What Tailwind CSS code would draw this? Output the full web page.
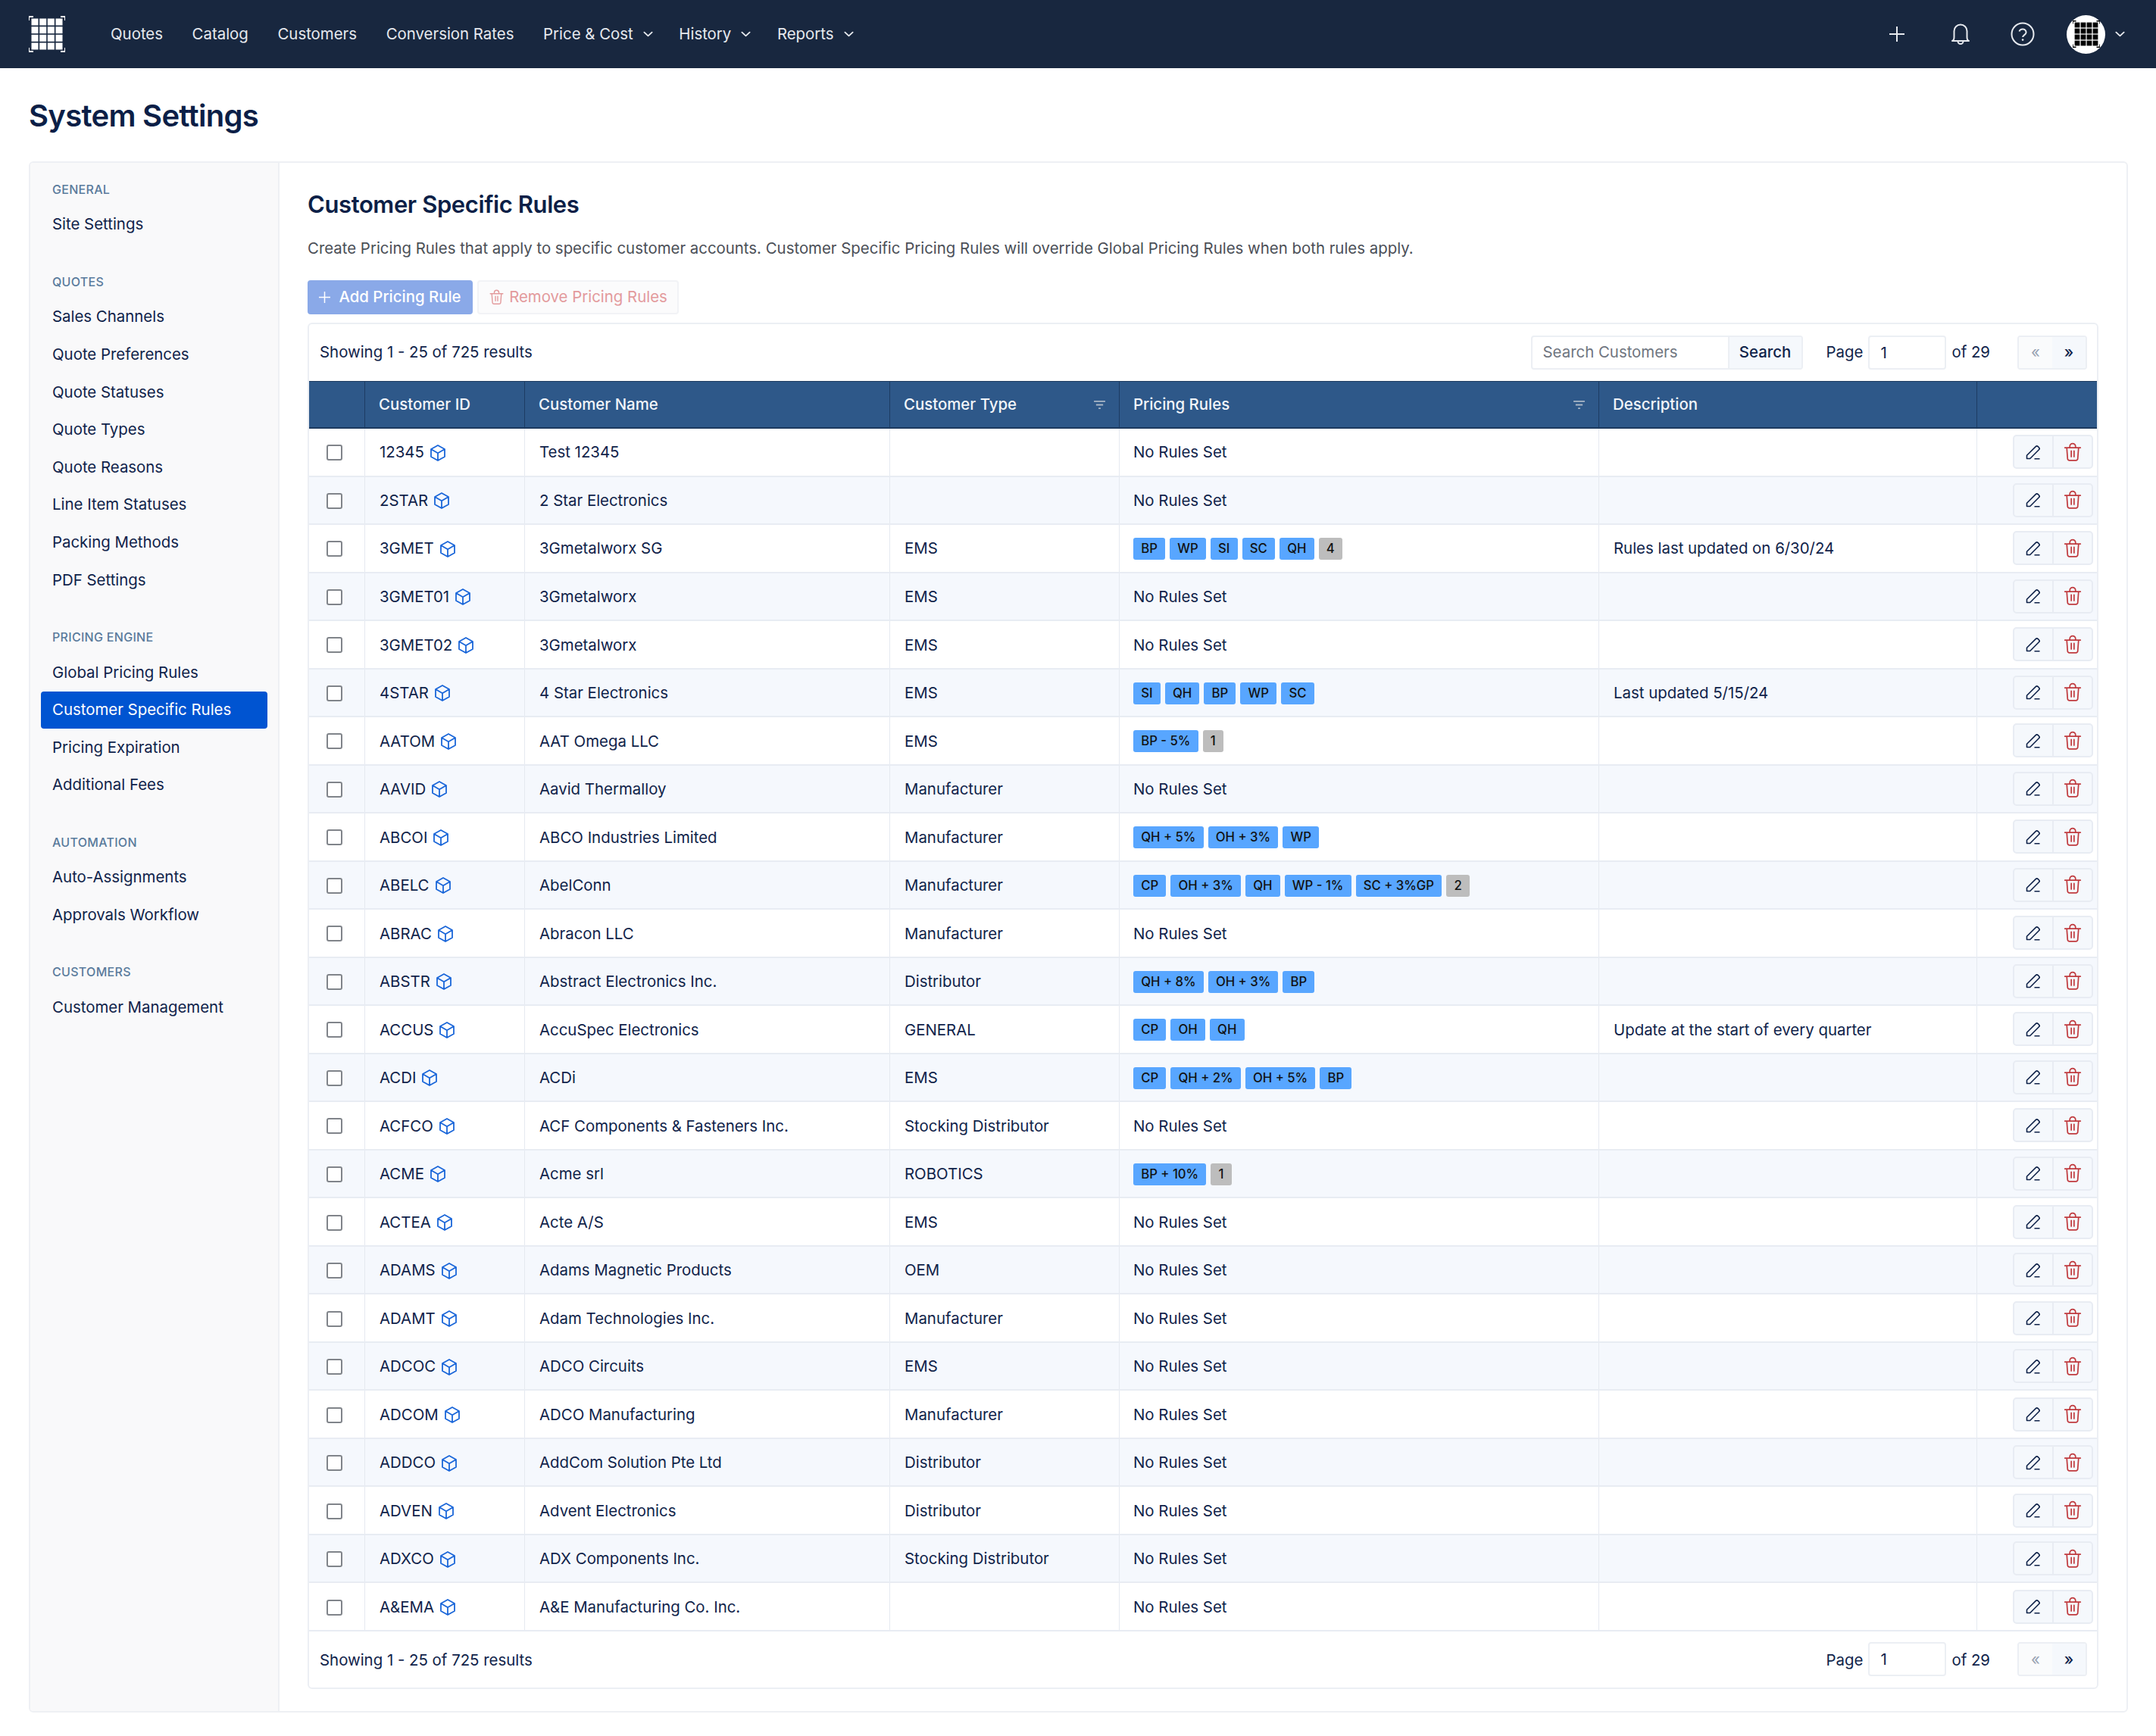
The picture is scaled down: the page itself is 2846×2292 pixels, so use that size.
<!DOCTYPE html>
<html lang="en">
<head>
    <meta charset="UTF-8">
    <title>System Settings</title>
    <script src="https://cdn.jsdelivr.net/npm/@tailwindcss/browser@4"></script>
</head>
<body class="bg-white font-[Inter,sans-serif] text-[20.4px] text-[#10234a] h-[2292px] overflow-hidden">
    <!-- Icons -->
    <svg class="hidden">
        <symbol id="cube" viewBox="0 0 22 22"><path d="M11 1l9 5v10l-9 5-9-5V6zM2 6l9 5.200L20 6M11 11.200V21" fill="none" stroke="currentColor" stroke-width="1.800" stroke-linejoin="round"/></symbol>
        <symbol id="pencil" viewBox="0 0 24 24"><path d="M3.500 20.500v-4.200L15.200 4.600a2.200 2.200 0 0 1 3.100 0l1.100 1.100a2.200 2.200 0 0 1 0 3.100L7.700 20.500zM13.500 20.800h7" fill="none" stroke="currentColor" stroke-width="1.600" stroke-linejoin="round"/></symbol>
        <symbol id="trash" viewBox="0 0 24 24"><path d="M2.500 6.500h19M8.500 6.500V5a3.500 3.500 0 0 1 7 0v1.500M4.800 6.500l1 13.300a2.200 2.200 0 0 0 2.200 2.200h8a2.200 2.200 0 0 0 2.200-2.200l1-13.300M10.300 10.500v7M13.700 10.500v7" fill="none" stroke="currentColor" stroke-width="1.600" stroke-linecap="round" stroke-linejoin="round"/></symbol>
        <symbol id="chev" viewBox="0 0 14 8"><path d="M1.500 1.500L7 6.500l5.500-5" fill="none" stroke="currentColor" stroke-width="2" stroke-linecap="round" stroke-linejoin="round"/></symbol>
        <symbol id="filter" viewBox="0 0 18 14"><path d="M1 2h16M4 7h10M7.500 12h3" fill="none" stroke="currentColor" stroke-width="2"/></symbol>
        <symbol id="grid4" viewBox="0 0 48 48">
            <path d="M0 6V1h6M42 1h6v5M0 42v5h6M42 47h6v-5" fill="none" stroke="currentColor" stroke-width="2"/>
            <g fill="currentColor">
                <rect x="3.500" y="3.500" width="9" height="9"/><rect x="14.200" y="3.500" width="9" height="9"/><rect x="24.800" y="3.500" width="9" height="9"/><rect x="35.500" y="3.500" width="9" height="9"/>
                <rect x="3.500" y="14.200" width="9" height="9"/><rect x="14.200" y="14.200" width="9" height="9"/><rect x="24.800" y="14.200" width="9" height="9"/><rect x="35.500" y="14.200" width="9" height="9"/>
                <rect x="3.500" y="24.800" width="9" height="9"/><rect x="14.200" y="24.800" width="9" height="9"/><rect x="24.800" y="24.800" width="9" height="9"/><rect x="35.500" y="24.800" width="9" height="9"/>
                <rect x="3.500" y="35.500" width="9" height="9"/><rect x="14.200" y="35.500" width="9" height="9"/><rect x="24.800" y="35.500" width="9" height="9"/><rect x="35.500" y="35.500" width="9" height="9"/>
            </g>
        </symbol>
    </svg>

    <!-- Top nav -->
    <header class="h-[90px] bg-[#18273f] flex items-center pl-[38px] text-[#e6e9ee]">
        <svg class="w-[48px] h-[48px] text-white mr-[60px]"><use href="#grid4"/></svg>
        <nav class="flex items-center gap-[38.6px]">
            <a>Quotes</a>
            <a>Catalog</a>
            <a>Customers</a>
            <a>Conversion Rates</a>
            <a class="flex items-center gap-[13px]">Price &amp; Cost <svg class="w-[13px] h-[8px] -mr-[4px]"><use href="#chev"/></svg></a>
            <a class="flex items-center gap-[13px]">History <svg class="w-[13px] h-[8px] -mr-[4px]"><use href="#chev"/></svg></a>
            <a class="flex items-center gap-[13px]">Reports <svg class="w-[13px] h-[8px] -mr-[4px]"><use href="#chev"/></svg></a>
        </nav>
        <div class="ml-auto flex items-center pr-[41px]">
            <svg class="w-[22px] h-[22px] mr-[60px]" viewBox="0 0 22 22"><path d="M11 1v20M1 11h20" fill="none" stroke="currentColor" stroke-width="2"/></svg>
            <svg class="w-[26px] h-[32px] mr-[53px]" viewBox="0 0 26 32"><path d="M2 25c1.800-.5 2.500-2 2.500-5v-8a8.500 8.500 0 0 1 17 0v8c0 3 .7 4.500 2.500 5zM9.500 25.500a3.500 3.500 0 0 0 7 0" fill="none" stroke="currentColor" stroke-width="2" stroke-linejoin="round"/></svg>
            <svg class="w-[32px] h-[32px] mr-[42px]" viewBox="0 0 32 32"><circle cx="16" cy="16" r="14.500" fill="none" stroke="currentColor" stroke-width="2"/><path d="M11.500 12.500a4.700 4.700 0 0 1 9.100 1.300c0 3-4.500 3.500-4.500 6.200" fill="none" stroke="currentColor" stroke-width="2"/><circle cx="16.100" cy="23.600" r="1.300" fill="currentColor"/></svg>
            <div class="w-[51px] h-[51px] rounded-full bg-white flex items-center justify-center text-black mr-[13px]">
                <svg class="w-[36px] h-[36px]"><use href="#grid4"/></svg>
            </div>
            <svg class="w-[13px] h-[8px]"><use href="#chev"/></svg>
        </div>
    </header>

    <h1 class="h-[123px] pl-[38px] pt-[3px] flex items-center text-[40px] font-semibold text-[#0c1f47] tracking-[-0.7px]">System Settings</h1>

    <div class="ml-[38px] w-[2771px] h-[2048px] border-2 border-[#eef0f4] rounded-[6px] flex overflow-hidden">
        <!-- Sidebar -->
        <aside class="w-[329px] shrink-0 bg-[#f9f9fa] border-r-2 border-[#eef0f4] pt-[23px] pl-[14px] pr-[14px]">
            <h4 class="h-[24px] flex items-center pl-[15px] text-[16px] font-medium tracking-[0.3px] text-[#5a7b9c]">GENERAL</h4>
            <ul class="mt-[10px] mb-[38.4px]">
                <li class="h-[49.6px] flex items-center pl-[15px]">Site Settings</li>
            </ul>
            <h4 class="h-[24px] flex items-center pl-[15px] text-[16px] font-medium tracking-[0.3px] text-[#5a7b9c]">QUOTES</h4>
            <ul class="mt-[10px] mb-[38.4px]">
                <li class="h-[49.6px] flex items-center pl-[15px]">Sales Channels</li>
                <li class="h-[49.6px] flex items-center pl-[15px]">Quote Preferences</li>
                <li class="h-[49.6px] flex items-center pl-[15px]">Quote Statuses</li>
                <li class="h-[49.6px] flex items-center pl-[15px]">Quote Types</li>
                <li class="h-[49.6px] flex items-center pl-[15px]">Quote Reasons</li>
                <li class="h-[49.6px] flex items-center pl-[15px]">Line Item Statuses</li>
                <li class="h-[49.6px] flex items-center pl-[15px]">Packing Methods</li>
                <li class="h-[49.6px] flex items-center pl-[15px]">PDF Settings</li>
            </ul>
            <h4 class="h-[24px] flex items-center pl-[15px] text-[16px] font-medium tracking-[0.3px] text-[#5a7b9c]">PRICING ENGINE</h4>
            <ul class="mt-[10px] mb-[38.4px]">
                <li class="h-[49.6px] flex items-center pl-[15px]">Global Pricing Rules</li>
                <li class="h-[49.6px] flex items-center pl-[15px] bg-[#0054d1] text-white rounded-[4px]">Customer Specific Rules</li>
                <li class="h-[49.6px] flex items-center pl-[15px]">Pricing Expiration</li>
                <li class="h-[49.6px] flex items-center pl-[15px]">Additional Fees</li>
            </ul>
            <h4 class="h-[24px] flex items-center pl-[15px] text-[16px] font-medium tracking-[0.3px] text-[#5a7b9c]">AUTOMATION</h4>
            <ul class="mt-[10px] mb-[38.4px]">
                <li class="h-[49.6px] flex items-center pl-[15px]">Auto-Assignments</li>
                <li class="h-[49.6px] flex items-center pl-[15px]">Approvals Workflow</li>
            </ul>
            <h4 class="h-[24px] flex items-center pl-[15px] text-[16px] font-medium tracking-[0.3px] text-[#5a7b9c]">CUSTOMERS</h4>
            <ul class="mt-[10px]">
                <li class="h-[49.6px] flex items-center pl-[15px]">Customer Management</li>
            </ul>
        </aside>

        <!-- Main -->
        <main class="pl-[37px] pt-[35px] w-[2400px]">
            <h2 class="h-[40px] flex items-center text-[31px] font-semibold text-[#0c1f47] tracking-[-0.4px]">Customer Specific Rules</h2>
            <p class="mt-[23px] h-[30px] flex items-center text-[#4b4f57]">Create Pricing Rules that apply to specific customer accounts. Customer Specific Pricing Rules will override Global Pricing Rules when both rules apply.</p>
            <div class="mt-[27px] h-[45px] flex gap-[6px]">
                <button class="w-[218px] bg-[#8aa9e8] text-white font-medium rounded-[4px] flex items-center justify-center gap-[11px]">
                    <svg class="w-[15px] h-[15px]" viewBox="0 0 15 15"><path d="M7.500 0v15M0 7.500h15" fill="none" stroke="currentColor" stroke-width="1.500"/></svg>
                    Add Pricing Rule
                </button>
                <button class="w-[266px] bg-[#fbfbfc] border-2 border-[#f2f3f6] text-[#e39a9c] rounded-[4px] flex items-center justify-center gap-[6px]">
                    <svg class="w-[21px] h-[21px]"><use href="#trash"/></svg>
                    Remove Pricing Rules
                </button>
            </div>

            <!-- Table card -->
            <section class="mt-[11px] w-[2364px] h-[1804px] border-2 border-[#eceff4] rounded-[6px] overflow-hidden">
                <div class="h-[75px] flex items-center pl-[14px] pr-[13px]">
                    <span>Showing 1 - 25 of 725 results</span>
                    <div class="ml-auto flex h-[45px] w-[359px] border-2 border-[#eceff4] rounded-[4px] overflow-hidden">
                        <input class="w-[258px] pl-[14px] outline-none placeholder:text-[#6f7580]" placeholder="Search Customers">
                        <button class="flex-1 bg-[#f5f8fc] border-l-2 border-[#eceff4] font-medium">Search</button>
                    </div>
                    <span class="ml-[31px]">Page</span>
                    <input class="ml-[7px] w-[103px] h-[45px] pl-[14px] border-2 border-[#eceff4] rounded-[4px] outline-none" value="1">
                    <span class="ml-[7px]">of 29</span>
                    <div class="ml-[36px] flex h-[45px] w-[92px] border-2 border-[#eceff4] rounded-[4px] overflow-hidden">
                        <button class="flex-1 bg-[#fafbfc] text-[#98a2b3]">«</button>
                        <button class="flex-1 bg-[#f5f8fc] font-medium">»</button>
                    </div>
                </div>
                <div class="grid grid-cols-[74px_211px_482px_303px_633px_499px_160px] h-[63px] bg-[#2e5889] border-t border-b-2 border-[#1d3a5f] text-[#f2f5f9] font-medium">
                    <div class="border-r border-[#1d3c63]"></div>
                    <div class="border-r border-[#1d3c63] flex items-center pl-[18px]">Customer ID</div>
                    <div class="border-r border-[#1d3c63] flex items-center pl-[18px]">Customer Name</div>
                    <div class="border-r border-[#1d3c63] flex items-center justify-between pl-[18px] pr-[17px]">Customer Type <svg class="w-[17px] h-[13px] text-[#a9b6c6]"><use href="#filter"/></svg></div>
                    <div class="border-r border-[#1d3c63] flex items-center justify-between pl-[18px] pr-[17px]">Pricing Rules <svg class="w-[17px] h-[13px] text-[#a9b6c6]"><use href="#filter"/></svg></div>
                    <div class="border-r border-[#1d3c63] flex items-center pl-[18px]">Description</div>
                    <div></div>
                </div>
                <div id="rows"></div>
                <div class="h-[74px] flex items-center pl-[14px] pr-[13px]">
                    <span class="pt-[2px]">Showing 1 - 25 of 725 results</span>
                    <span class="ml-auto pt-[2px]">Page</span>
                    <input class="ml-[7px] w-[103px] h-[45px] pl-[14px] border-2 border-[#eceff4] rounded-[4px] outline-none" value="1">
                    <span class="ml-[7px] pt-[2px]">of 29</span>
                    <div class="ml-[36px] flex h-[45px] w-[92px] border-2 border-[#eceff4] rounded-[4px] overflow-hidden">
                        <button class="flex-1 bg-[#fafbfc] text-[#98a2b3]">«</button>
                        <button class="flex-1 bg-[#f5f8fc] font-medium">»</button>
                    </div>
                </div>
            </section>
        </main>
    </div>

    <script>
        const customers = [
            ["12345", "Test 12345", "", [], ""],
            ["2STAR", "2 Star Electronics", "", [], ""],
            ["3GMET", "3Gmetalworx SG", "EMS", ["BP", "WP", "SI", "SC", "QH", "#4"], "Rules last updated on 6/30/24"],
            ["3GMET01", "3Gmetalworx", "EMS", [], ""],
            ["3GMET02", "3Gmetalworx", "EMS", [], ""],
            ["4STAR", "4 Star Electronics", "EMS", ["SI", "QH", "BP", "WP", "SC"], "Last updated 5/15/24"],
            ["AATOM", "AAT Omega LLC", "EMS", ["BP - 5%", "#1"], ""],
            ["AAVID", "Aavid Thermalloy", "Manufacturer", [], ""],
            ["ABCOI", "ABCO Industries Limited", "Manufacturer", ["QH + 5%", "OH + 3%", "WP"], ""],
            ["ABELC", "AbelConn", "Manufacturer", ["CP", "OH + 3%", "QH", "WP - 1%", "SC + 3%GP", "#2"], ""],
            ["ABRAC", "Abracon LLC", "Manufacturer", [], ""],
            ["ABSTR", "Abstract Electronics Inc.", "Distributor", ["QH + 8%", "OH + 3%", "BP"], ""],
            ["ACCUS", "AccuSpec Electronics", "GENERAL", ["CP", "OH", "QH"], "Update at the start of every quarter"],
            ["ACDI", "ACDi", "EMS", ["CP", "QH + 2%", "OH + 5%", "BP"], ""],
            ["ACFCO", "ACF Components & Fasteners Inc.", "Stocking Distributor", [], ""],
            ["ACME", "Acme srl", "ROBOTICS", ["BP + 10%", "#1"], ""],
            ["ACTEA", "Acte A/S", "EMS", [], ""],
            ["ADAMS", "Adams Magnetic Products", "OEM", [], ""],
            ["ADAMT", "Adam Technologies Inc.", "Manufacturer", [], ""],
            ["ADCOC", "ADCO Circuits", "EMS", [], ""],
            ["ADCOM", "ADCO Manufacturing", "Manufacturer", [], ""],
            ["ADDCO", "AddCom Solution Pte Ltd", "Distributor", [], ""],
            ["ADVEN", "Advent Electronics", "Distributor", [], ""],
            ["ADXCO", "ADX Components Inc.", "Stocking Distributor", [], ""],
            ["A&EMA", "A&E Manufacturing Co. Inc.", "", [], ""],
        ];

        const pill = (r) => r[0] === "#"
            ? `<span class="h-[29px] px-[10.2px] flex items-center rounded-[3px] bg-[#bdbdbd] text-[16.7px] font-medium text-[#111]">${r.slice(1)}</span>`
            : `<span class="h-[29px] px-[10.2px] flex items-center rounded-[3px] bg-[#58a6ff] text-[16.7px] font-medium text-[#111]">${r}</span>`;

        const esc = (s) => s.replace(/&/g, "&amp;");

        document.getElementById("rows").innerHTML = customers.map((c, i) => `
            <div class="grid grid-cols-[74px_211px_482px_303px_633px_499px_160px] h-[63.52px] border-b-2 border-[#e8ecf3] ${i % 2 ? "bg-[#f5f8fd]" : "bg-white"}">
                <div class="border-r border-[#e5e9f0] flex items-center pl-[23px] pt-[2px]"><input type="checkbox" class="appearance-none w-[21px] h-[21px] bg-white border-2 border-[#80848a] rounded-[3px]"></div>
                <div class="border-r border-[#e5e9f0] flex items-center pl-[19px] pt-[2px] gap-[7px]">${esc(c[0])}<svg class="w-[22px] h-[22px] text-[#1a66d9]"><use href="#cube"/></svg></div>
                <div class="border-r border-[#e5e9f0] flex items-center pl-[19px] pt-[2px]">${esc(c[1])}</div>
                <div class="border-r border-[#e5e9f0] flex items-center pl-[19px] pt-[2px]">${c[2]}</div>
                <div class="border-r border-[#e5e9f0] flex items-center pl-[18px] pt-[2px] gap-[6px]">${c[3].length ? c[3].map(pill).join("") : "No Rules Set"}</div>
                <div class="border-r border-[#e5e9f0] flex items-center pl-[19px] pt-[2px]">${c[4]}</div>
                <div class="flex items-center pl-[47px]">
                    <div class="flex w-[106px] h-[45px] bg-[#f5f8fc] border-2 border-[#e8ecf3] rounded-[5px] overflow-hidden">
                        <button class="w-[52px] border-r-2 border-[#e8ecf3] flex items-center justify-center text-[#10234a]"><svg class="w-[24px] h-[24px]"><use href="#pencil"/></svg></button>
                        <button class="flex-1 flex items-center justify-center text-[#c03a3e]"><svg class="w-[26px] h-[26px]"><use href="#trash"/></svg></button>
                    </div>
                </div>
            </div>`).join("");
    </script>
</body>
</html>
